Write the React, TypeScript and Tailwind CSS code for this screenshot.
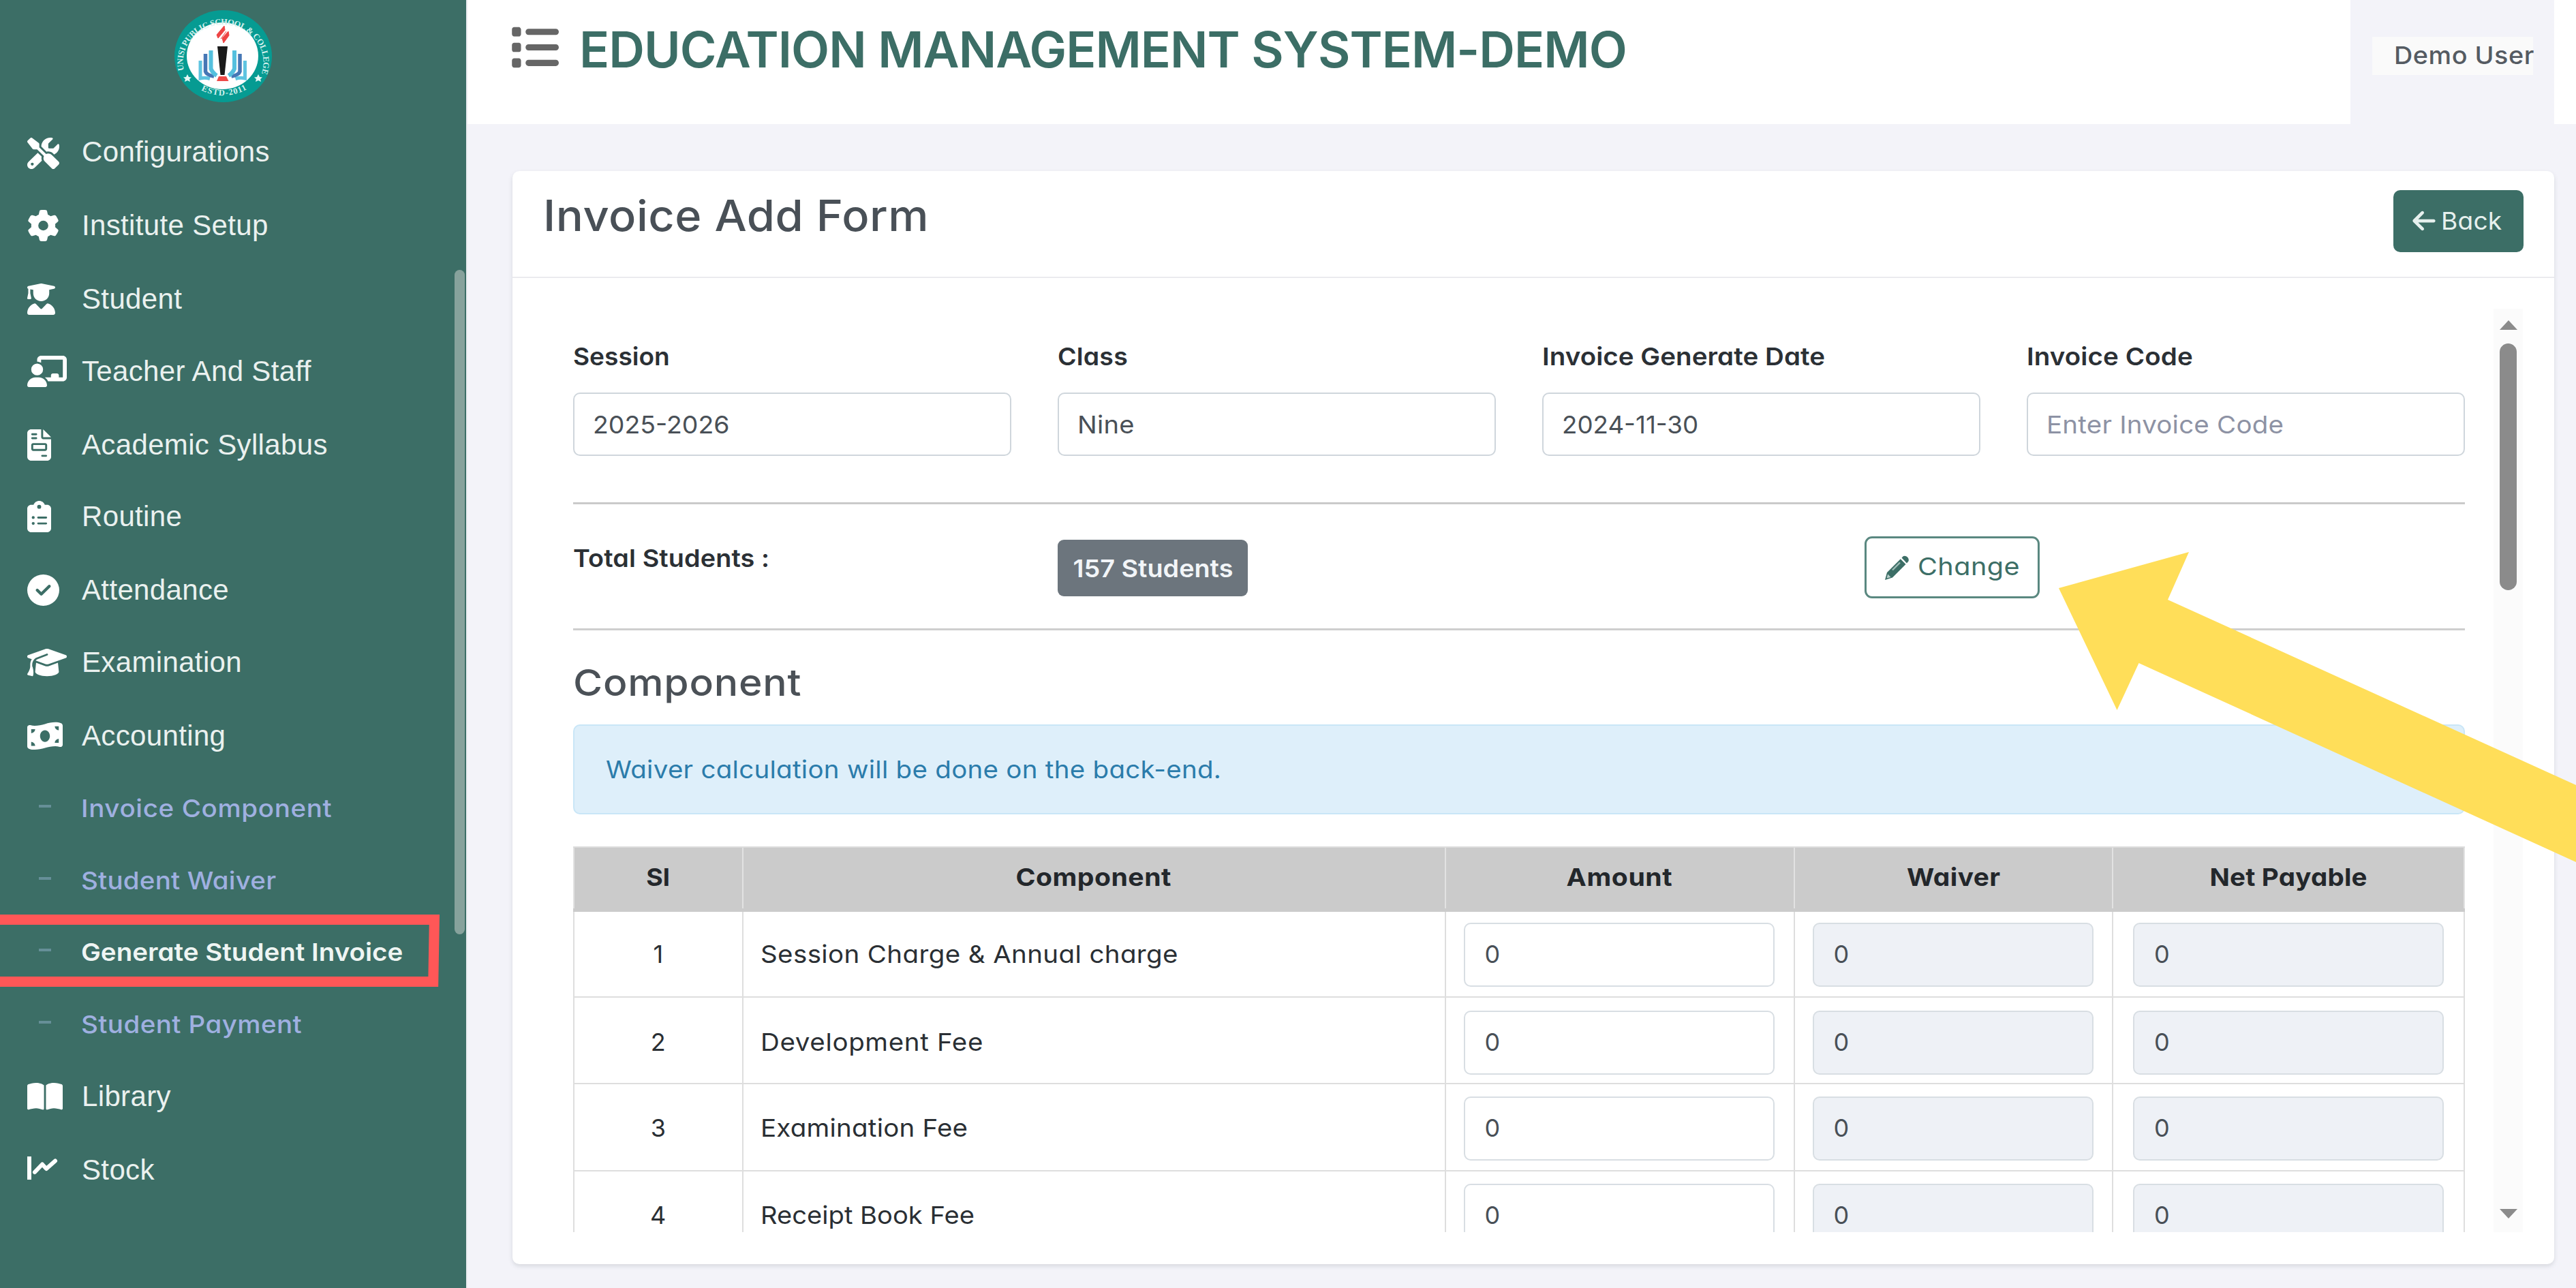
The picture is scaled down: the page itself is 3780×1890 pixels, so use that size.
import React from 'react';
import {
  FaArrowLeft,
  FaBookOpen,
  FaChalkboardUser,
  FaCircleCheck,
  FaClipboardList,
  FaFileInvoice,
  FaGear,
  FaGraduationCap,
  FaList,
  FaMoneyBillWave,
  FaScrewdriverWrench,
  FaUserGraduate,
} from 'react-icons/fa6';

function StockIcon({ className }: { className?: string }) {
  return (
    <svg viewBox="0 0 47 46" className={className} fill="none" stroke="currentColor" preserveAspectRatio="none">
      <path d="M3 3V37" strokeWidth="6" />
      <path d="M11 26L22 14.500L28 21L41 9.500" strokeWidth="6" strokeLinejoin="round" strokeLinecap="round" />
    </svg>
  );
}

function PencilIcon({ className }: { className?: string }) {
  return (
    <svg viewBox="0 0 38 38" className={className}>
      <path fill="#3c6e66" d="M25.500 4.500L28 2a6 6 0 0 1 7.500 7.500L33 12.500ZM23.800 6.200L31.500 14L12 33.500L1 37L4 26Z" />
      <path d="M12 22.500L23 11.500" stroke="#9dbab5" strokeWidth="2.400" />
      <path d="M5.200 28.500L9.500 33L3.500 34.500Z" fill="#b9cfcb" />
    </svg>
  );
}

function Logo() {
  const book = (
    <>
      <path d="M38 74V100Q45 98.500 52 100.500" stroke="#5fc4e0" strokeWidth="5" />
      <path d="M45.500 64V90Q47 95 58 97" stroke="#4677b5" strokeWidth="5.500" />
      <path d="M53.500 59V86Q56 92 62 96" stroke="#55c0de" strokeWidth="6" />
    </>
  );
  return (
    <svg viewBox="0 0 143 135" className="h-[135px] w-[143px]" fill="none">
      <defs>
        <path id="ring-top" d="M15 92A59 55 0 1 1 128 92" />
        <path id="ring-bottom" d="M26 108A66 62 0 0 0 117 108" />
      </defs>
      <ellipse cx="71.500" cy="67.500" rx="71.500" ry="67.500" fill="#069b92" />
      <ellipse cx="70.500" cy="67" rx="52.500" ry="49" fill="#fff" />
      <text fill="#d5f1ee" fontSize="12.500" fontFamily="Liberation Serif" fontWeight="700">
        <textPath href="#ring-top" textLength="208" startOffset="4">UNISI PUBLIC SCHOOL &amp; COLLEGE</textPath>
      </text>
      <text fill="#d5f1ee" fontSize="12.500" fontFamily="Liberation Serif" fontWeight="700">
        <textPath href="#ring-bottom" textLength="70" startOffset="16">ESTD-2011</textPath>
      </text>
      <path d="M19 94l2 4 4 .5-3 2.500 1 4-4-2-4 2 1-4-3-2.500 4-.5ZM123 94l2 4 4 .5-3 2.500 1 4-4-2-4 2 1-4-3-2.500 4-.5Z" fill="#e8f8f6" />
      <path d="M73 23L62 36L64 41L74 29ZM79 31L70 41L72 48L80 37ZM68 42L76 31" fill="#ee4444" stroke="#ee4444" strokeWidth="1" />
      <path d="M63 53H78L73.500 95H67.500Z" fill="#1a1a1a" />
      <path d="M65 97H76L79.500 104H62Z" fill="#ee4a48" />
      {book}
      <g transform="translate(141.500 0) scale(-1 1)">{book}</g>
    </svg>
  );
}

function Wide({ className = '', children }: { className?: string; children: React.ReactNode }) {
  return <span className={`inline-block whitespace-nowrap ${className}`}>{children}</span>;
}

const navItems = [
  { label: 'Configurations', Icon: FaScrewdriverWrench, size: 'w-[47px] translate-y-[2px]', gap: '' },
  { label: 'Institute Setup', Icon: FaGear, size: 'w-[47px]', gap: 'mt-[3px]' },
  { label: 'Student', Icon: FaUserGraduate, size: 'w-[41px]', gap: 'mt-[3px]' },
  { label: 'Teacher And Staff', Icon: FaChalkboardUser, size: 'w-[58px]', gap: 'mt-[1px]' },
  { label: 'Academic Syllabus', Icon: FaFileInvoice, size: 'w-[35px]', gap: 'mt-[3px]' },
  { label: 'Routine', Icon: FaClipboardList, size: 'w-[35px]', gap: '' },
  { label: 'Attendance', Icon: FaCircleCheck, size: 'w-[47px]', gap: 'mt-[3px]' },
  { label: 'Examination', Icon: FaGraduationCap, size: 'w-[58px]', gap: 'mt-[1px]' },
  { label: 'Accounting', Icon: FaMoneyBillWave, size: 'w-[52px]', gap: 'mt-[3px]' },
];

const subItems = [
  { label: 'Invoice Component', style: 'font-medium text-[#9fb0e0] tracking-[0.6px]' },
  { label: 'Student Waiver', style: 'font-medium text-[#9fb0e0] tracking-[0.2px]' },
  { label: 'Generate Student Invoice', style: 'font-semibold text-[#eff5f3] tracking-[0px]', active: true },
  { label: 'Student Payment', style: 'font-medium text-[#9fb0e0] tracking-[0.4px]' },
];

const lowerItems = [
  { label: 'Library', Icon: FaBookOpen, size: 'w-[52px]', gap: 'mt-[2px]' },
  { label: 'Stock', Icon: StockIcon, size: 'w-[47px]', gap: 'mt-[3px]' },
];

function NavRow({ label, Icon, size, gap }: { label: string; Icon: React.ElementType; size: string; gap: string }) {
  return (
    <a className={`flex h-[105px] items-center pl-10 ${gap}`}>
      <span className="flex w-[80px] items-center">
        <Icon preserveAspectRatio="none" className={`h-[46px] text-white ${size}`} />
      </span>
      <span className="font-['Liberation_Sans',sans-serif] text-[42px] tracking-[0.35px] text-[#eaf1ef]">{label}</span>
    </a>
  );
}

function Sidebar() {
  return (
    <aside className="relative h-full w-[684px] shrink-0 bg-[#3c6e66]">
      <div className="flex h-[170px] pt-[15px] pl-[256px]">
        <Logo />
      </div>
      <nav className="flex flex-col">
        {navItems.map((item) => (
          <NavRow key={item.label} {...item} />
        ))}
        {subItems.map((item) => (
          <a key={item.label} className="relative mt-[0.6px] flex h-[105px] items-center pl-[57px]">
            {item.active && (
              <span className="absolute top-[-2px] left-[-20px] h-[106px] w-[665px] origin-top -skew-x-1 border-[15.500px] border-[#ff5757]" />
            )}
            <span className="mr-[44px] h-[4px] w-[18px] -translate-y-[2px] bg-[#668f98]" />
            <Wide className={`origin-left translate-y-px scale-x-[1.07] text-[36px] ${item.style}`}>{item.label}</Wide>
          </a>
        ))}
        {lowerItems.map((item) => (
          <NavRow key={item.label} {...item} />
        ))}
      </nav>
      <div className="absolute top-[396px] right-[2px] h-[975px] w-[15px] rounded-full bg-[#87a29c]" />
    </aside>
  );
}

function Header() {
  return (
    <header className="flex h-[182px] bg-white">
      <div className="flex flex-1 items-start pt-[28px] pl-[63px]">
        <FaList preserveAspectRatio="none" className="mt-[5px] h-[73px] w-[71px] text-[#666]" />
        <h1 className="ml-[30px] text-[73px] leading-[89px] font-semibold tracking-[-0.95px] whitespace-nowrap text-[#3c6e66]">
          EDUCATION MANAGEMENT SYSTEM-DEMO
        </h1>
      </div>
      <div className="h-full w-[299px] bg-[#f3f3f9] pt-[54px] pl-[32px]">
        <div className="h-[56px] w-[236px] bg-[#fafafa] pl-[32px] leading-[54px]">
          <Wide className="origin-left scale-x-[1.05] text-[36px] font-medium tracking-[0.5px] text-[#555b62]">Demo User</Wide>
        </div>
      </div>
      <div className="w-8" />
    </header>
  );
}

const fields = [
  { label: 'Session', labelStyle: 'scale-x-[1.03] tracking-[0px]', value: '2025-2026', valueStyle: 'scale-x-[1.04] tracking-[0px] text-[#495057]' },
  { label: 'Class', labelStyle: 'scale-x-[1.04] tracking-[0.2px]', value: 'Nine', valueStyle: 'scale-x-[1.06] tracking-[0.2px] text-[#495057]' },
  { label: 'Invoice Generate Date', labelStyle: 'scale-x-[1.07] tracking-[0.05px]', value: '2024-11-30', valueStyle: 'scale-x-[1.02] tracking-[0px] text-[#495057]' },
  { label: 'Invoice Code', labelStyle: 'scale-x-[1.07] tracking-[0.1px]', value: 'Enter Invoice Code', valueStyle: 'scale-x-[1.07] tracking-[0.2px] text-[#8d92a4]' },
];

const headings = [
  { label: 'Sl', style: 'scale-x-[1.04]' },
  { label: 'Component', style: 'scale-x-[1.09] tracking-[0.4px]' },
  { label: 'Amount', style: 'scale-x-[1.09] tracking-[0.5px]' },
  { label: 'Waiver', style: 'scale-x-[1.08] tracking-[0.4px]' },
  { label: 'Net Payable', style: 'scale-x-[1.07] tracking-[0.2px]' },
];

const rows = [
  { name: 'Session Charge & Annual charge', style: 'scale-x-[1.07] tracking-[0.35px]', height: 'h-[126px] pb-[2px]' },
  { name: 'Development Fee', style: 'scale-x-[1.07] tracking-[0.6px]', height: 'h-[128px] pt-[2px]' },
  { name: 'Examination Fee', style: 'scale-x-[1.07] tracking-[0.2px]', height: 'h-[128px]' },
  { name: 'Receipt Book Fee', style: 'scale-x-[1.06] tracking-[0px]', height: 'h-[128px]' },
];

const columns = 'grid grid-cols-[247.500px_1031px_512px_467.500px_1fr]';

function Cell({ className, children }: { className: string; children: React.ReactNode }) {
  return <div className={`flex items-center ${className}`}>{children}</div>;
}

function AmountBox({ disabled }: { disabled?: boolean }) {
  return (
    <div
      className={`flex h-[94px] w-full translate-y-px items-center rounded-[10px] border-[2.500px] border-[#d8dee3] pb-[2px] pl-[29px] text-[36px] text-[#495057] ${
        disabled ? 'bg-[#eef1f6]' : 'bg-white'
      }`}
    >
      0
    </div>
  );
}

function ComponentTable() {
  return (
    <div className="mt-[47px] text-[#2a2f34]">
      <div className={`${columns} h-[96px] border-t-2 border-[#dcdcdc] bg-[#cbcbcb] pb-[5px]`}>
        {headings.map((h, i) => (
          <div
            key={h.label}
            className={`flex items-center justify-center border-l-[2.500px] border-[#e2e2e2] pb-[4px] text-[36px] font-bold text-[#23272b] ${
              i === 4 ? 'border-r-[2.500px]' : ''
            }`}
          >
            <Wide className={h.style}>{h.label}</Wide>
          </div>
        ))}
      </div>
      {rows.map((r, i) => (
        <div key={r.name} className="border-b-[2.500px] border-[#dedede]">
          <div className={`${columns} -mb-[2.500px] text-[36px]`}>
            <Cell className={`${r.height} justify-center border-l-[2.500px] border-[#dedede]`}>{i + 1}</Cell>
            <Cell className={`${r.height} border-l-[2.500px] border-[#dedede] pl-[25px]`}>
              <Wide className={`origin-left ${r.style}`}>{r.name}</Wide>
            </Cell>
            <Cell className={`${r.height} border-l-[2.500px] border-[#dedede] pr-[28px] pl-[26px]`}>
              <AmountBox />
            </Cell>
            <Cell className={`${r.height} border-l-[2.500px] border-[#dedede] pr-[27px] pl-[26px]`}>
              <AmountBox disabled />
            </Cell>
            <Cell className={`${r.height} border-x-[2.500px] border-[#dedede] pr-[29px] pl-[29px]`}>
              <AmountBox disabled />
            </Cell>
          </div>
        </div>
      ))}
    </div>
  );
}

function InvoiceForm() {
  return (
    <div className="w-[2776px] shrink-0">
      <div className="mt-[50px] grid grid-cols-4 gap-x-[68px]">
        {fields.map((f) => (
          <div key={f.label} className="flex flex-col">
            <label className="text-[36px] leading-[40px] font-semibold text-[#2b3035]">
              <Wide className={`origin-left ${f.labelStyle}`}>{f.label}</Wide>
            </label>
            <div className="mt-[33px] flex h-[93px] items-center rounded-[10px] border-[2.500px] border-[#cfd6dc] pl-[27px] text-[36px]">
              <Wide className={`origin-left ${f.valueStyle}`}>{f.value}</Wide>
            </div>
          </div>
        ))}
      </div>
      <div className="mt-[68px] h-[3px] bg-[#cacaca]" />
      <div className="grid h-[182px] grid-cols-4 gap-x-[68px]">
        <div className="pt-[59px] text-[36px] leading-[40px] font-semibold text-[#2b3035]">
          <Wide className="origin-left scale-x-[1.05] tracking-[0.1px]">Total Students :</Wide>
        </div>
        <div className="pt-[52px]">
          <span className="flex h-[83px] w-[279px] items-center justify-center rounded-[9px] bg-[#6c757d] text-[36px] font-semibold text-[#f2f5f8]">
            <Wide className="scale-x-[1.05]">157 Students</Wide>
          </span>
        </div>
        <div className="col-span-2 pt-[47px] pl-[473px]">
          <button className="flex h-[91px] w-[257px] items-center rounded-[11px] border-[3px] border-[#5a8880] pl-[26px] text-[36px] text-[#3c6e66]">
            <PencilIcon className="mr-[11px] h-[38px] w-[38px]" />
            <Wide className="origin-left -translate-y-[2px] scale-x-[1.1] tracking-[0.4px]">Change</Wide>
          </button>
        </div>
      </div>
      <div className="h-[3px] bg-[#cecece]" />
      <h3 className="mt-[47px] text-[54px] leading-[60px] font-medium text-[#4b5157]">
        <Wide className="origin-left scale-x-[1.09] tracking-[0.7px]">Component</Wide>
      </h3>
      <div className="mt-[31px] flex h-[132px] items-center rounded-[10px] border-[2.500px] border-[#c9e6f7] bg-[#deeffa] pl-[46px] text-[36px] text-[#2b7cab]">
        <Wide className="origin-left scale-x-[1.07] tracking-[0.25px]">Waiver calculation will be done on the back-end.</Wide>
      </div>
      <ComponentTable />
    </div>
  );
}

function ScrollBar() {
  return (
    <div className="ml-[42px] flex w-[43px] shrink-0 flex-col items-center bg-[#fbfbfb] pt-[17px] pb-[20px]">
      <svg viewBox="0 0 26 14" className="h-[14px] w-[26px]">
        <path d="M0 14L13 0L26 14Z" fill="#8b8b8b" />
      </svg>
      <div className="mt-[20px] h-[362px] w-[25px] rounded-full bg-[#8b8b8b]" />
      <svg viewBox="0 0 26 14" className="mt-auto h-[14px] w-[26px]">
        <path d="M0 0L13 14L26 0Z" fill="#8b8b8b" />
      </svg>
    </div>
  );
}

export default function App() {
  return (
    <div className="relative flex h-[1890px] w-[3780px] overflow-hidden bg-[#f3f3f9] font-[Inter,sans-serif] [font-feature-settings:'cv11']">
      <Sidebar />
      <div className="flex flex-1 flex-col border-l-2 border-[#e9ecf0]">
        <Header />
        <main className="mt-[69px] mr-8 ml-[66px] h-[1604px] rounded-[10px] bg-white shadow-[0_3px_6px_rgba(56,65,74,0.15)]">
          <div className="flex h-[157px] items-start justify-between border-b-[2.500px] border-[#ebebee] pr-[45px] pl-[45px]">
            <h2 className="mt-[33px] text-[63px] leading-[64px] font-medium text-[#495057]">
              <Wide className="origin-left scale-x-[1.06] tracking-[0.5px]">Invoice Add Form</Wide>
            </h2>
            <button className="mt-[28px] flex h-[91px] w-[191px] items-center rounded-[10px] bg-[#3c6e66] pb-[2px] pl-[27px] text-[36px] text-[#e6f0ee]">
              <FaArrowLeft className="mr-[7px] h-[38px] w-[36px]" />
              <Wide className="origin-left scale-x-[1.03] tracking-[0.2px]">Back</Wide>
            </button>
          </div>
          <div className="pt-[45px] pl-[89px]">
            <div className="flex h-[1355px] overflow-hidden">
              <InvoiceForm />
              <ScrollBar />
            </div>
          </div>
        </main>
      </div>
      <svg viewBox="0 0 759 455" className="absolute top-[810px] left-[3021px] h-[455px] w-[759px]">
        <path d="M0 53L191 0L160 70L759 342V455L117.500 163L85.500 232Z" fill="#ffde59" />
      </svg>
    </div>
  );
}
